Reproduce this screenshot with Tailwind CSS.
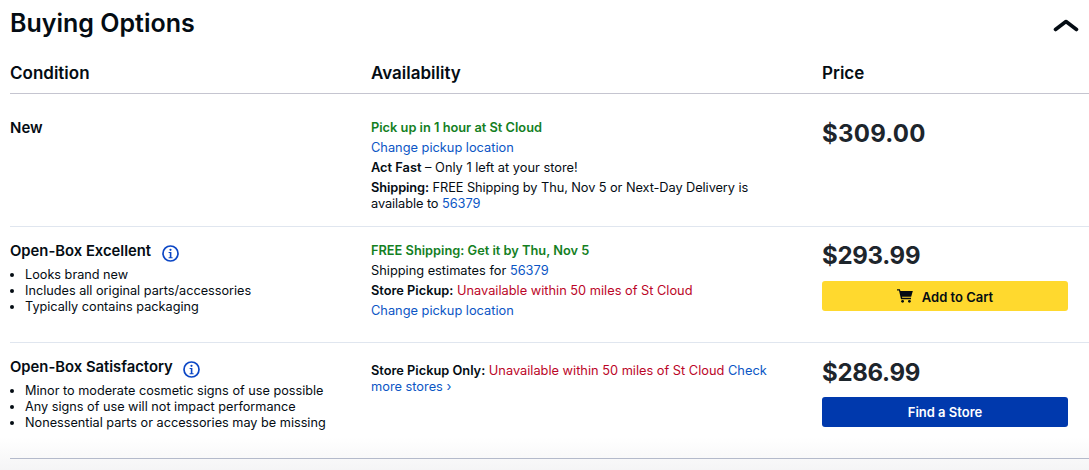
<!DOCTYPE html>
<html>
<head>
<script src="https://cdn.jsdelivr.net/npm/@tailwindcss/browser@4"></script>
</head>
<body class="w-[1089px] h-[470px] overflow-hidden bg-gradient-to-b from-white from-[93%] to-[#f5f5f6] font-['Inter',sans-serif] text-[#040c13]">
<div class="pl-[10px] h-[459px]">
  <div class="flex justify-between items-start h-[58px]">
    <h1 class="text-[25px] leading-[30px] mt-[8px] font-semibold">Buying Options</h1>
    <svg class="w-[26px] h-[14px] mt-[18px] mr-[10px]" viewBox="0 0 26 14" fill="none"><path d="M2.5 11.5 L13 3.5 L23.5 11.5" stroke="#040c13" stroke-width="3.6" stroke-linecap="round" stroke-linejoin="round"/></svg>
  </div>
  <div class="grid grid-cols-[361px_451px_1fr] h-[36px] border-b border-[#c5c5d0] text-[17px] leading-[30px] font-semibold">
    <div>Condition</div><div>Availability</div><div>Price</div>
  </div>

  <div class="grid grid-cols-[361px_451px_1fr] h-[133px] border-b border-[#e0e6ef] pt-[24px]">
    <div class="text-[15px] leading-[20px] font-semibold">New</div>
    <div class="text-[12.8px] leading-[20px] pr-[50px]">
      <div class="font-semibold text-[#14801f]">Pick up in 1 hour at St Cloud</div>
      <div class="text-[#0b56c5]">Change pickup location</div>
      <div><span class="font-semibold">Act Fast</span> – Only 1 left at your store!</div>
      <div class="leading-[16px] mt-[2px] tracking-[-0.08px]"><span class="font-semibold">Shipping:</span> FREE Shipping by Thu, Nov 5 or Next-Day Delivery is available to <span class="text-[#0b56c5]">56379</span></div>
    </div>
    <div class="text-[24px] leading-[30px] font-bold text-[#1d252c] mt-[1px] tracking-[0.25px]">$309.00</div>
  </div>

  <div class="grid grid-cols-[361px_451px_1fr] h-[116px] border-b border-[#e0e6ef] pt-[14px]">
    <div>
      <div class="flex items-start gap-[11px] text-[14.8px] leading-[20px] font-semibold">Open-Box Excellent
        <svg class="w-[17px] h-[17px] mt-[4px]" viewBox="0 0 17 17" fill="none"><circle cx="8.5" cy="8.5" r="7.5" stroke="#0b46c5" stroke-width="1.7"/><path d="M6.6 7 H9.4 V12.2 H10.6 V13.3 H6.6 V12.2 H7.8 V8.1 H6.6 Z" fill="#0b46c5"/><circle cx="8.5" cy="4.8" r="1.1" fill="#0b46c5"/></svg>
      </div>
      <ul class="list-disc pl-[15px] text-[12.7px] leading-[16px] mt-[5px]">
        <li>Looks brand new</li><li>Includes all original parts/accessories</li><li>Typically contains packaging</li>
      </ul>
    </div>
    <div class="text-[12.8px] leading-[20px]">
      <div class="font-semibold text-[#14801f]">FREE Shipping: Get it by Thu, Nov 5</div>
      <div>Shipping estimates for <span class="text-[#0b56c5]">56379</span></div>
      <div><span class="font-semibold">Store Pickup:</span> <span class="text-[#bb0628]">Unavailable within 50 miles of St Cloud</span></div>
      <div class="text-[#0b56c5]">Change pickup location</div>
    </div>
    <div class="pr-[21px]">
      <div class="text-[24px] leading-[30px] font-bold text-[#1d252c] tracking-[-0.3px]">$293.99</div>
      <div class="flex items-center justify-center gap-[9px] h-[30px] mt-[10px] pt-[3px] rounded-[3px] bg-[#ffd92e] text-[13px] font-semibold">
        <svg class="w-[16px] h-[14px] -mt-[4px]" viewBox="0 0 16 14" fill="#040c13"><path d="M0 0.3 H2.9 L3.4 2 H15.8 L14.2 7.8 H5 L5.2 8.8 H14 V10.2 H4 L2 1.6 H0 Z"/><circle cx="5.6" cy="12.3" r="1.4"/><circle cx="12.4" cy="12.3" r="1.4"/></svg>
        Add to Cart
      </div>
    </div>
  </div>

  <div class="grid grid-cols-[361px_451px_1fr] h-[116px] border-b border-[#b4bacb] pt-[14px]">
    <div>
      <div class="flex items-start gap-[10px] text-[14.8px] leading-[20px] font-semibold">Open-Box Satisfactory
        <svg class="w-[17px] h-[17px] mt-[4px]" viewBox="0 0 17 17" fill="none"><circle cx="8.5" cy="8.5" r="7.5" stroke="#0b46c5" stroke-width="1.7"/><path d="M6.6 7 H9.4 V12.2 H10.6 V13.3 H6.6 V12.2 H7.8 V8.1 H6.6 Z" fill="#0b46c5"/><circle cx="8.5" cy="4.8" r="1.1" fill="#0b46c5"/></svg>
      </div>
      <ul class="list-disc pl-[15px] text-[12.7px] leading-[16px] mt-[5px]">
        <li>Minor to moderate cosmetic signs of use possible</li><li>Any signs of use will not impact performance</li><li>Nonessential parts or accessories may be missing</li>
      </ul>
    </div>
    <div class="text-[12.8px] leading-[16px] pt-[6px] pr-[50px]">
      <span class="font-semibold">Store Pickup Only:</span> <span class="text-[#bb0628]">Unavailable within 50 miles of St Cloud</span> <span class="text-[#0b56c5]">Check more stores ›</span>
    </div>
    <div class="pr-[21px]">
      <div class="text-[24px] leading-[30px] font-bold text-[#1d252c] tracking-[-0.3px] mt-[1px]">$286.99</div>
      <div class="flex items-center justify-center h-[30px] mt-[9px] pt-[1px] rounded-[3px] bg-[#0039ad] text-white text-[13px] font-semibold">Find a Store</div>
    </div>
  </div>
</div>
</body>
</html>
